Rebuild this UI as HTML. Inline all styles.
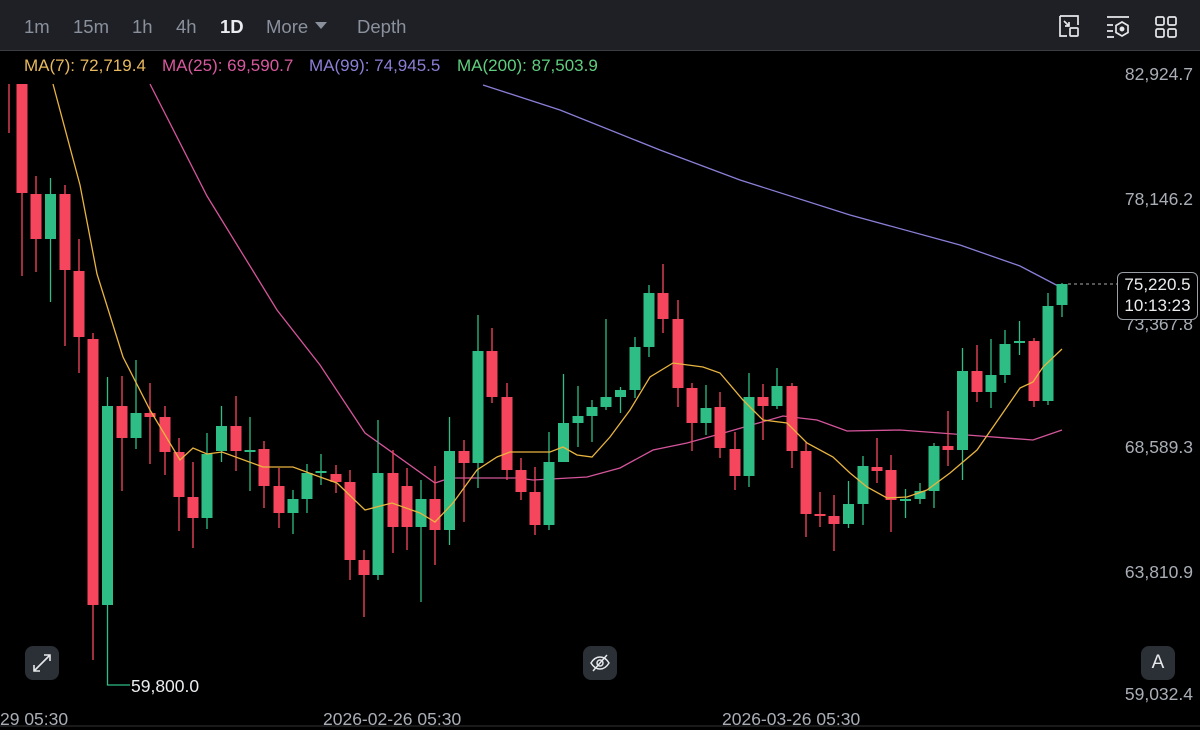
<!DOCTYPE html>
<html><head><meta charset="utf-8"><style>
html,body{margin:0;padding:0;background:#000;width:1200px;height:727px;overflow:hidden;font-family:"Liberation Sans",sans-serif}
.top{position:absolute;left:0;top:0;width:1200px;height:50px;background:#1e2026;border-bottom:1px solid #3a3d44}
.tab{position:absolute;top:16px;font-size:18.5px;color:#8b919c}
.leg{position:absolute;top:56px;font-size:17px;white-space:nowrap}
.ax{position:absolute;right:7px;font-size:17.5px;color:#a9aeb6}
.tm{position:absolute;top:709px;font-size:17.5px;color:#a9aeb6}
.btn{position:absolute;width:34px;height:34px;border-radius:8px;background:#2b2f36}
</style></head><body>
<div class="top">
<span class="tab" style="left:24px">1m</span>
<span class="tab" style="left:73px">15m</span>
<span class="tab" style="left:132px">1h</span>
<span class="tab" style="left:176px">4h</span>
<span class="tab" style="left:220px;color:#eaecef;font-weight:bold">1D</span>
<span class="tab" style="left:266px">More</span>
<svg style="position:absolute;left:315px;top:22px" width="12" height="9"><path d="M0 0H12L6 7Z" fill="#8b919c"/></svg>
<span class="tab" style="left:357px">Depth</span>
<svg style="position:absolute;left:1056px;top:14px" width="130" height="24" fill="none" stroke="#e6e8ea" stroke-width="1.7">
<path d="M4 2H22V11M11 22H4V2"/><rect x="14" y="14" width="8" height="8" rx="1"/><path d="M8 7L13 12M13 8V12H9"/>
<path d="M51 3H73M51 11H57M51 17H57M51 23H58"/><path d="M66 8L72 11.5V18.5L66 22L60 18.5V11.5Z"/><circle cx="66" cy="15" r="1.6" fill="#e6e8ea"/>
<rect x="100" y="3" width="8" height="8" rx="1.5"/><rect x="112" y="3" width="8" height="8" rx="1.5"/><rect x="100" y="15" width="8" height="8" rx="1.5"/><rect x="112" y="15" width="8" height="8" rx="1.5"/>
</svg>
</div>
<div class="leg" style="left:24px;color:#e9b95f">MA(7): 72,719.4</div>
<div class="leg" style="left:162px;color:#d9599f">MA(25): 69,590.7</div>
<div class="leg" style="left:309px;color:#8b7fd6">MA(99): 74,945.5</div>
<div class="leg" style="left:457px;color:#5fcf7f">MA(200): 87,503.9</div>

<svg style="position:absolute;left:0;top:0" width="1200" height="727">
<defs><clipPath id="c"><rect x="0" y="82" width="1110" height="640"/></clipPath></defs>
<g clip-path="url(#c)">
<polyline fill="none" stroke="#8a7fd8" stroke-width="1.3" points="483,85 560,110 660,150 740,180 850,215 960,245 1020,266 1062,288"/>
<polyline fill="none" stroke="#d5559b" stroke-width="1.3" points="150,84 207,196 277,310 320,365 365,433 435,483 450,478 517,478 533,480 587,477 620,468 653,450 687,443 727,432 783,416 817,420 847,431 900,430 967,435 1033,440 1062,430"/>
<g stroke="#f6465d" stroke-width="1.3" fill="#f6465d">
<path d="M9 84V133M22 84V276M36 176V272M65 185V346M79 239V373M93 333V660M122 376V491M150 383V464M165 406V475M179 438V531M193 462V548M236 396V471M264 441V508M279 468V528M336 465V493M350 470V580M364 550V617M393 450V553M407 468V550M435 466V565M464 440V522M492 328V403M507 383V480M521 458V500M535 467V535M663 264V333M678 300V407M692 383V451M720 392V458M735 432V490M763 384V440M792 383V468M806 442V537M820 492V527M834 495V551M877 438V483M891 455V532M948 411V466M977 345V402M1034 338V407"/>
<path stroke="none" d="M16.5 84h11V193h-11ZM30.5 194h11V239h-11ZM59.5 194h11V270h-11ZM73.5 271h11V337h-11ZM87.5 339h11V605h-11ZM116.5 406h11V438h-11ZM144.5 413h11V417h-11ZM159.5 417h11V452h-11ZM173.5 452h11V497h-11ZM187.5 497h11V518h-11ZM230.5 426h11V451h-11ZM258.5 449h11V486h-11ZM273.5 486h11V513h-11ZM330.5 474h11V482h-11ZM344.5 482h11V560h-11ZM358.5 560h11V575h-11ZM387.5 473h11V527h-11ZM401.5 486h11V527h-11ZM429.5 499h11V530h-11ZM458.5 451h11V463h-11ZM486.5 351h11V397h-11ZM501.5 397h11V470h-11ZM515.5 470h11V492h-11ZM529.5 492h11V525h-11ZM657.5 293h11V319h-11ZM672.5 319h11V388h-11ZM686.5 388h11V423h-11ZM714.5 407h11V448h-11ZM729.5 449h11V476h-11ZM757.5 397h11V406h-11ZM786.5 386h11V451h-11ZM800.5 451h11V514h-11ZM814.5 514h11V516h-11ZM828.5 516h11V524h-11ZM871.5 467h11V471h-11ZM885.5 470h11V500h-11ZM942.5 446h11V450h-11ZM971.5 371h11V392h-11ZM1028.5 341h11V401h-11Z"/>
</g>
<g stroke="#2ebd85" stroke-width="1.3" fill="#2ebd85">
<path d="M50.5 178V302M107.5 377V685H130M136 360V449M207 433V529M221.5 406V462M250 417V491M293 490V534M307 464V513M321 454V485M378 420V580M421 480V602M449.5 417V545M478 315V488M549 432V530M563.5 374V462M578 386V447M592 400V442M606 319V410M620.5 387V413M635 337V398M649 285V357M706 385V435M749 373V487M777 368V409M848.5 481V528M863 456V525M905.5 489V518M920 483V504M934 443V508M962.5 348V480M991 339V408M1005 330V383M1019.5 321V355M1048 293V405M1062 283V317" fill="none"/>
<path stroke="none" d="M45 194h11V239h-11ZM102 406h11V605h-11ZM130.5 413h11V438h-11ZM201.5 454h11V518h-11ZM216 426h11V451h-11ZM244.5 450h11V452h-11ZM287.5 499h11V513h-11ZM301.5 473h11V499h-11ZM315.5 471h11V473h-11ZM372.5 473h11V575h-11ZM415.5 499h11V527h-11ZM444 451h11V530h-11ZM472.5 351h11V463h-11ZM543.5 462h11V525h-11ZM558 423h11V462h-11ZM572.5 416h11V423h-11ZM586.5 407h11V416h-11ZM600.5 397h11V407h-11ZM615 390h11V397h-11ZM629.5 347h11V390h-11ZM643.5 293h11V347h-11ZM700.5 408h11V423h-11ZM743.5 397h11V476h-11ZM771.5 386h11V406h-11ZM843 504h11V524h-11ZM857.5 466h11V504h-11ZM900 499h11V501h-11ZM914.5 491h11V499h-11ZM928.5 446h11V491h-11ZM957 371h11V450h-11ZM985.5 375h11V392h-11ZM999.5 344h11V375h-11ZM1014 341h11V343h-11ZM1042.5 306h11V401h-11ZM1056.5 284h11V305h-11Z"/>
</g>
<polyline fill="none" stroke="#e9b43f" stroke-width="1.3" points="53,84 80,185 97,274 123,357 150,410 180,460 193,448 207,454 222,452 263,467 293,467 320,477 337,483 365,510 392,503 420,513 435,522 453,503 477,470 497,457 510,452 550,452 563,447 577,455 592,457 610,437 630,410 650,377 673,363 703,367 720,373 743,400 763,420 787,423 807,443 833,457 850,473 867,487 887,498 907,497 927,490 950,473 977,450 1000,417 1020,388 1033,382 1043,367 1062,349"/>
</g>
<path d="M1068 284H1117" stroke="#aaa" stroke-width="1" stroke-dasharray="3,3"/>
<line x1="0" y1="726" x2="1200" y2="726" stroke="#333" stroke-width="1"/>
</svg>

<div class="ax" style="top:64px">82,924.7</div>
<div class="ax" style="top:189px">78,146.2</div>
<div class="ax" style="top:314px">73,367.8</div>
<div class="ax" style="top:437px">68,589.3</div>
<div class="ax" style="top:562px">63,810.9</div>
<div class="ax" style="top:684px">59,032.4</div>
<div style="position:absolute;left:1117px;top:272px;width:79px;height:45px;border:1px solid #9a9ea5;border-radius:6px;background:#000;color:#eaecef;font-size:17px;text-align:center;line-height:21px;padding-top:1px">75,220.5<br>10:13:23</div>
<div style="position:absolute;left:131px;top:676px;font-size:17.5px;color:#eaecef">59,800.0</div>
<div class="tm" style="left:0">29 05:30</div>
<div class="tm" style="left:323px">2026-02-26 05:30</div>
<div class="tm" style="left:722px">2026-03-26 05:30</div>

<div class="btn" style="left:25px;top:646px"><svg width="34" height="34" fill="none" stroke="#e6e8ea" stroke-width="1.6"><path d="M9 25L25 9M19 9H25V15M9 19V25H15"/></svg></div>
<div class="btn" style="left:583px;top:646px"><svg width="34" height="34" fill="none" stroke="#e6e8ea" stroke-width="1.5"><path d="M8 17C11 12 14 11 17 11S23 12 26 17C23 22 20 23 17 23S11 22 8 17Z"/><circle cx="17" cy="17" r="3"/><path d="M10 25L24 9"/></svg></div>
<div class="btn" style="left:1141px;top:646px;color:#e6e8ea;font-size:19px;text-align:center;line-height:34px">A</div>
</body></html>
